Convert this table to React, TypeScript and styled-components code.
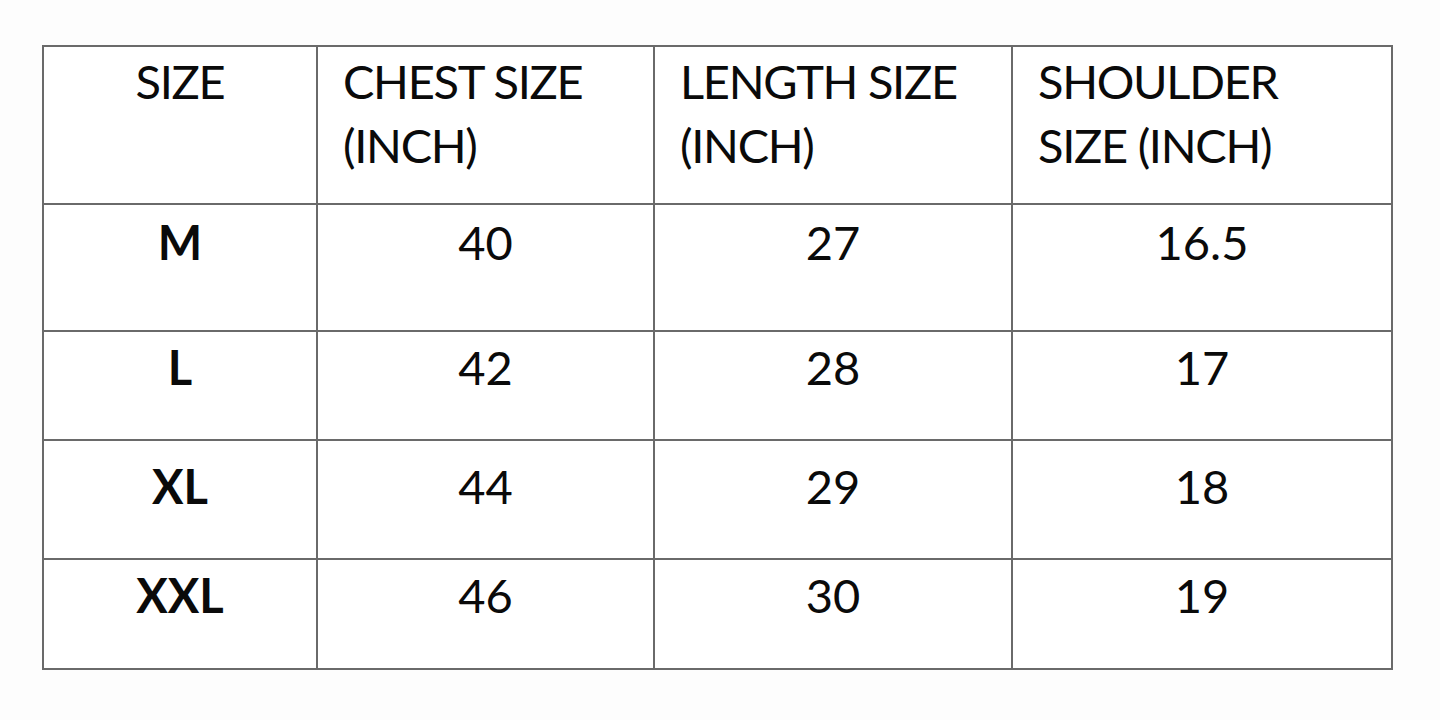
import React from 'react';
import styled, { createGlobalStyle } from 'styled-components';

const GlobalStyle = createGlobalStyle`
  html, body {
    margin: 0;
    padding: 0;
    background: #fdfdfd;
  }
  body {
    font-family: Lato, 'Open Sans', 'Liberation Sans', sans-serif;
    color: #0a0a0a;
  }
`;

const rows = [
  { size: 'M', chest: '40', length: '27', shoulder: '16.5', height: 127, top: 4.5 },
  { size: 'L', chest: '42', length: '28', shoulder: '17', height: 109, top: 2.5 },
  { size: 'XL', chest: '44', length: '29', shoulder: '18', height: 119, top: 12.5 },
  { size: 'XXL', chest: '46', length: '30', shoulder: '19', height: 110, top: 2.5 },
];

function App() {
  return (
    <Page>
      <GlobalStyle />
      <Table>
        <HeadCell $center>SIZE</HeadCell>
        <HeadCell>
          CHEST SIZE
          <br />
          (INCH)
        </HeadCell>
        <HeadCell>
          LENGTH SIZE
          <br />
          (INCH)
        </HeadCell>
        <HeadCell>
          SHOULDER
          <br />
          SIZE (INCH)
        </HeadCell>
        {rows.map((r) => (
          <React.Fragment key={r.size}>
            <Cell $h={r.height} $top={r.top} $bold>
              {r.size}
            </Cell>
            <Cell $h={r.height} $top={r.top}>
              {r.chest}
            </Cell>
            <Cell $h={r.height} $top={r.top}>
              {r.length}
            </Cell>
            <Cell $h={r.height} $top={r.top}>
              {r.shoulder}
            </Cell>
          </React.Fragment>
        ))}
      </Table>
    </Page>
  );
}

const Page = styled.div`
  width: 1440px;
  height: 720px;
  padding: 45px 0 0 42px;
  box-sizing: border-box;
`;

const Table = styled.div`
  display: grid;
  grid-template-columns: 274px 337px 358px 380px;
  width: fit-content;
  background: #fff;
  border-top: 2px solid #6a6a6a;
  border-left: 2px solid #6a6a6a;
`;

const HeadCell = styled.div<{ $center?: boolean }>`
  box-sizing: border-box;
  height: 158px;
  padding: 1.5px 0 0 ${(p) => (p.$center ? '0' : '25px')};
  border-right: 2px solid #6a6a6a;
  border-bottom: 2px solid #6a6a6a;
  text-align: ${(p) => (p.$center ? 'center' : 'left')};
  font-size: 47px;
  letter-spacing: -1.3px;
  line-height: 64px;
  white-space: nowrap;
`;

const Cell = styled.div<{ $h: number; $top: number; $bold?: boolean }>`
  box-sizing: border-box;
  height: ${(p) => p.$h}px;
  padding-top: ${(p) => p.$top}px;
  border-right: 2px solid #6a6a6a;
  border-bottom: 2px solid #6a6a6a;
  text-align: center;
  font-size: 47px;
  font-weight: ${(p) => (p.$bold ? 700 : 400)};
  line-height: 64px;
`;

export default App;
